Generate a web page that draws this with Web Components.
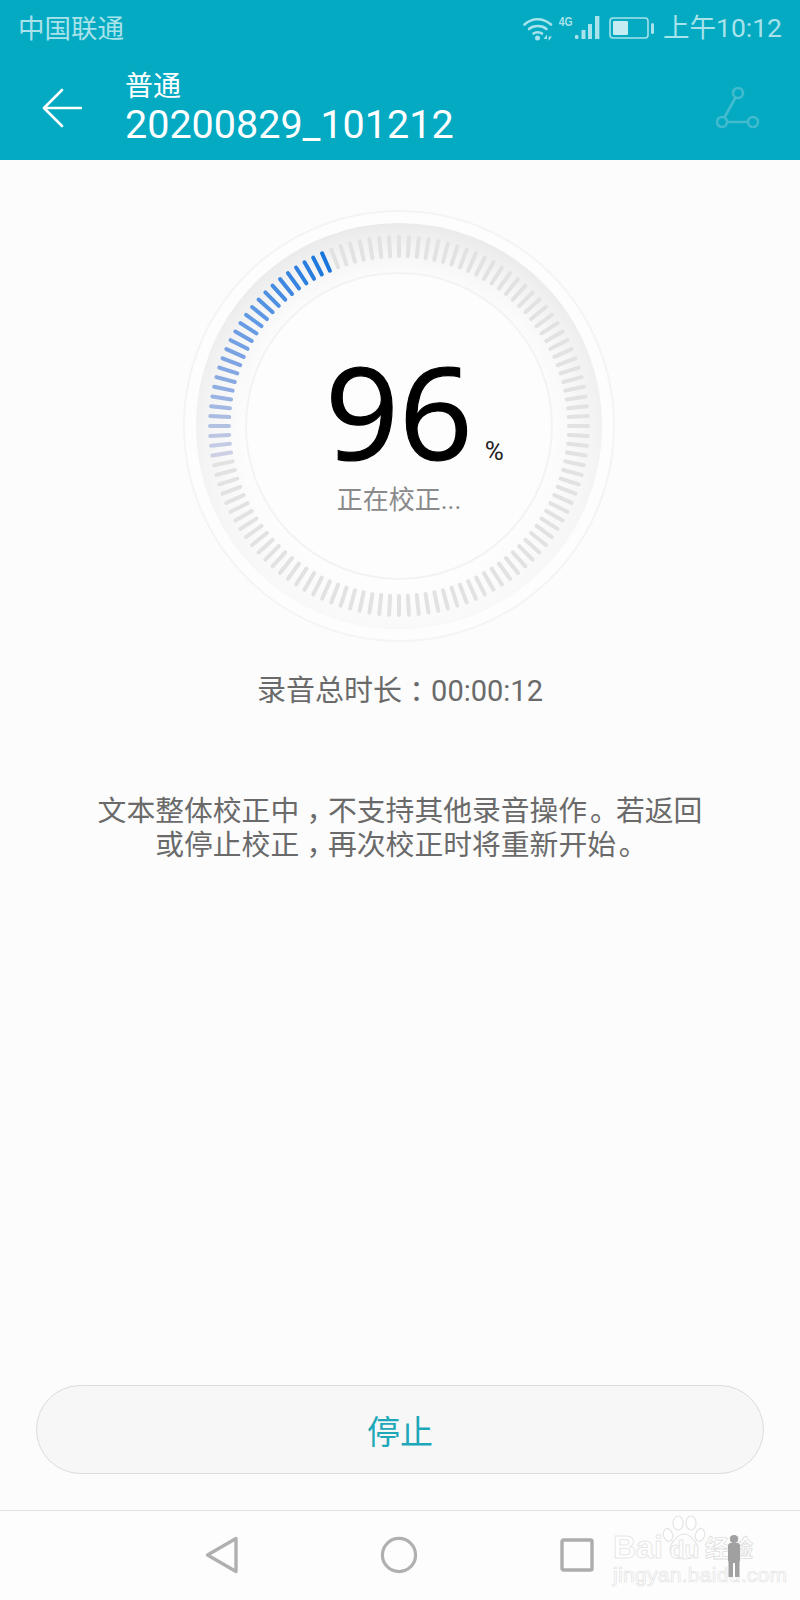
<!DOCTYPE html>
<html lang="zh">
<head>
<meta charset="utf-8">
<title>校正</title>
<style>
html,body{margin:0;padding:0;background:#fcfcfc}
body{font-family:Roboto,"Noto Sans CJK SC",sans-serif}
</style>
</head>
<body>
<recorder-app>
  <app-header>
    <span slot="carrier">中国联通</span>
    <span slot="time">上午10:12</span>
    <span slot="mode">普通</span>
    <span slot="name">20200829_101212</span>
  </app-header>
  <progress-dial value="96" label="正在校正..."></progress-dial>
  <info-text>录音总时长<cjk-punct>：</cjk-punct>00:00:12</info-text>
  <notice-text>文本整体校正中<cjk-punct>，</cjk-punct>不支持其他录音操作<cjk-punct style="--l:.1em">。</cjk-punct>若返回<br>或停止校正<cjk-punct>，</cjk-punct>再次校正时将重新开始<cjk-punct style="--l:.1em">。</cjk-punct></notice-text>
  <stop-button>停止</stop-button>
  <nav-bar></nav-bar>
</recorder-app>
<script>
function def(name, html, setup){
  customElements.define(name, class extends HTMLElement{
    constructor(){super();const r=this.attachShadow({mode:'open'});r.innerHTML=html;}
    connectedCallback(){ if(setup) setup(this); }
  });
}
const FONT='Roboto,"Noto Sans CJK SC",sans-serif';

def('recorder-app',`<style>
:host{display:flex;flex-direction:column;width:800px;height:1600px;background:#fcfcfc;overflow:hidden;font-family:${FONT}}
</style><slot></slot>`);

def('cjk-punct',`<style>
:host{display:inline;font-feature-settings:"halt";padding-left:var(--l,.25em);padding-right:calc(.5em - var(--l,.25em))}
</style><slot></slot>`);

def('app-header',`<style>
:host{display:block;height:160px;background:#03aac2;color:#fff;flex:none}
.status{display:flex;align-items:center;height:55px;padding:2px 18px 0 18px;color:#a8e2ea;font-size:26.5px;box-sizing:border-box}
.sp{flex:1}
.carrier{line-height:53px}
.icons{display:flex;align-items:center;margin-top:-2px}
.time{font-size:26.5px;margin-left:8px;line-height:53px}
.g4{font:bold 13px/13px "Liberation Sans",sans-serif;transform:scaleX(.8);margin:-12px 0 0 3px;color:#a8e2ea}
svg{display:block}
.bar{display:flex;align-items:center;height:105px;padding-left:42px;padding-right:40px;box-sizing:border-box}
.titles{margin-left:43px;display:flex;flex-direction:column;margin-top:3px}
.mode{font-size:28px;line-height:32px}
.name{font-size:39.5px;line-height:46px;margin-top:-1px}
</style>
<div class="status">
  <span class="carrier"><slot name="carrier"></slot></span>
  <span class="sp"></span>
  <div class="icons">
    <svg width="31" height="26" viewBox="0 0 31 26" fill="none" stroke="#a8e2ea" stroke-width="2.6" stroke-linecap="round">
      <path d="M1.5 9.5C9 2.5 20 2.5 28 9.5"/><path d="M6 14C10.5 10 19 10 23.5 14"/><path d="M10.5 18.5C12.5 16.8 17 16.8 19 18.5"/>
      <circle cx="14.5" cy="23" r="2.5" fill="#a8e2ea" stroke="none"/>
      <path d="M24 19.5l-3.4 4.5h3.4zM25.6 26l3.4-4.5h-3.4z" fill="#a8e2ea" stroke="none"/>
    </svg>
    <span class="g4">4G</span>
    <svg width="27" height="26" viewBox="0 0 27 26" fill="#a8e2ea"><rect x="1" y="20" width="3.4" height="4" rx="1"/><rect x="7.5" y="15" width="4" height="9"/><rect x="14" y="9" width="4" height="15"/><rect x="21" y="1" width="4.4" height="23"/></svg>
    <svg width="46" height="24" viewBox="0 0 46 24" style="margin-left:8px" fill="none"><rect x="1" y="2" width="38" height="20" rx="3" stroke="#a8e2ea" stroke-width="1.6"/><rect x="4" y="5" width="15" height="14" rx="1" fill="#c4ecf2"/><rect x="42" y="7" width="3" height="11" rx="1.5" fill="#a8e2ea"/></svg>
    <span class="time"><slot name="time"></slot></span>
  </div>
</div>
<div class="bar">
  <svg width="40" height="40" viewBox="0 0 40 40" fill="none" stroke="#fff" stroke-width="2.6" stroke-linecap="round" stroke-linejoin="round"><path d="M39 20H2M20 2L2 20l18 18"/></svg>
  <div class="titles"><span class="mode"><slot name="mode"></slot></span><span class="name"><slot name="name"></slot></span></div>
  <span class="sp"></span>
  <svg width="44" height="44" viewBox="0 0 44 44" fill="none" stroke="#42bbce" stroke-width="2.6"><circle cx="22" cy="7" r="5"/><circle cx="6" cy="36" r="5"/><circle cx="37" cy="36" r="5"/><path d="M19.5 11.5L8.5 31.5M11 36H32"/></svg>
</div>`);

def('progress-dial',`<style>
:host{display:block;position:relative;width:440px;height:440px;margin:46px 0 0 179px;flex:none;font-family:${FONT}}
svg{position:absolute;left:0;top:0;display:block}
.c{position:absolute;inset:0;display:flex;flex-direction:column;align-items:center}
.num{margin-top:139px;height:130px;display:flex;align-items:baseline;font-family:"Open Sans",sans-serif;font-size:129px;line-height:130px;color:#000;-webkit-text-stroke:1.2px #000}
.pct{width:0;font-family:Roboto,sans-serif;font-size:26px;line-height:26px;white-space:nowrap;color:#222;-webkit-text-stroke:0}
.pct span{margin-left:12px}
.lab{font-size:26px;line-height:34px;color:#8a8a8a;margin-top:8px}
</style>
<svg width="440" height="440" viewBox="-220 -220 440 440" fill="none">
<defs>
<radialGradient id="r" gradientUnits="userSpaceOnUse" cx="0" cy="0" r="204"><stop offset=".75" stop-color="#fbfbfb"/><stop offset=".86" stop-color="#f5f5f5"/><stop offset="1" stop-color="#eaeaea"/></radialGradient>
<linearGradient id="w" x1="0" y1="0" x2="0" y2="1"><stop offset="0" stop-color="#fff" stop-opacity="0"/><stop offset="1" stop-color="#fff" stop-opacity=".7"/></linearGradient>
</defs>
<circle r="215" stroke="#f4f4f4" stroke-width="2" fill="#fdfdfd"/>
<circle r="178" stroke="url(#r)" stroke-width="50"/>
<circle r="178" stroke="url(#w)" stroke-width="50"/>
<circle r="153" stroke="#f3f3f3" stroke-width="2" fill="#fdfdfd"/>
<g id="t" stroke-width="4" stroke-linecap="round"></g>
</svg>
<div class="c"><div class="num"><span id="v"></span><span class="pct"><span>%</span></span></div><div class="lab" id="l"></div></div>`, el=>{
  const r=el.shadowRoot, g=r.getElementById('t');
  r.getElementById('v').textContent=el.getAttribute('value');
  r.getElementById('l').textContent=el.getAttribute('label');
  if(g.childElementCount) return;
  const stops=[[0,[25,118,220]],[.35,[90,150,228]],[.7,[140,170,225]],[1,[205,208,228]]];
  const mix=t=>{for(let i=1;i<stops.length;i++){if(t<=stops[i][0]){const a=stops[i-1],b=stops[i],k=(t-a[0])/(b[0]-a[0]);return 'rgb('+a[1].map((v,j)=>Math.round(v+(b[1][j]-v)*k)).join(',')+')';}}return 'rgb(205,208,228)';};
  let s='';
  for(let i=0;i<120;i++){
    const deg=i*3-24, a=deg*Math.PI/180, sn=Math.sin(a), cs=-Math.cos(a);
    const back=(i===0?0:(120-i)*3);
    const col=i===0?mix(0):(back<=75?mix(back/75):'#e2e2e2');
    s+=`<line x1="${(sn*170).toFixed(2)}" y1="${(cs*170).toFixed(2)}" x2="${(sn*189).toFixed(2)}" y2="${(cs*189).toFixed(2)}" stroke="${col}"/>`;
  }
  g.innerHTML=s;
});

def('info-text',`<style>
:host{display:block;text-align:center;font-size:29px;line-height:36px;color:#6a6a6a;margin-top:27px;flex:none;font-family:${FONT}}
</style><slot></slot>`);

def('notice-text',`<style>
:host{display:block;text-align:center;font-size:28.8px;line-height:34px;color:#6a6a6a;margin-top:85px;flex:none;font-family:${FONT}}
</style><slot></slot>`);

def('stop-button',`<style>
:host{display:flex;align-items:center;justify-content:center;box-sizing:border-box;margin:auto 36px 36px;height:89px;border:1.5px solid #dcdcdc;border-radius:45px;background:#f7f7f7;color:#1ca8b9;font-size:33px;flex:none;font-family:${FONT}}
</style><slot></slot>`);

def('nav-bar',`<style>
:host{display:block;position:relative;box-sizing:border-box;height:90px;border-top:1.5px solid #e2e2e2;background:#fdfdfd;flex:none;font-family:"Liberation Sans",sans-serif}
.row{display:flex;align-items:center;justify-content:center;height:88px;gap:0}
.row svg{display:block}
.mark{position:absolute;left:613px;top:-4px;width:150px;height:86px}
.bd{position:absolute;left:0;top:25px;font-size:32px;font-weight:bold;line-height:30px;color:#fff;-webkit-text-stroke:1px #e8e8e8;white-space:nowrap}
.bd .du{margin-left:7px;font-size:24px}
.jy{position:absolute;left:0;top:58px;font-size:21px;line-height:20px;color:#fff;-webkit-text-stroke:.7px #e4e4e4;white-space:nowrap;letter-spacing:.3px}
.jing{position:absolute;left:92px;top:26px;font:bold 24px/28px "Noto Sans CJK SC",sans-serif;color:#fff;-webkit-text-stroke:.8px #dedede;white-space:nowrap}
.paw{position:absolute;left:49px;top:8px}
.man{position:absolute;left:114px;top:27px}
</style>
<div class="row">
  <svg width="34" height="38" viewBox="0 0 34 38" fill="none" stroke="#b0b0b0" stroke-width="3.4" stroke-linejoin="round" style="margin-left:-1px"><path d="M31 2.5V35.5L2.5 19Z"/></svg>
  <svg width="38" height="38" viewBox="0 0 38 38" fill="none" stroke="#b0b0b0" stroke-width="3.2" style="margin-left:141px"><circle cx="19" cy="19" r="16.6"/></svg>
  <svg width="34" height="34" viewBox="0 0 34 34" fill="none" stroke="#adadad" stroke-width="3.4" stroke-linejoin="round" style="margin-left:142px"><rect x="2" y="2" width="30" height="30" rx="1.5"/></svg>
</div>
<div class="mark">
  <svg class="paw" width="44" height="46" viewBox="0 0 44 46" fill="#fff" stroke="#e4e4e4" stroke-width="1.2"><ellipse cx="6" cy="20" rx="4.5" ry="6.5" transform="rotate(-15 6 20)"/><ellipse cx="16" cy="8" rx="5" ry="7"/><ellipse cx="29" cy="8" rx="5" ry="7"/><ellipse cx="38" cy="20" rx="4.5" ry="6.5" transform="rotate(15 38 20)"/><path d="M22 19c6 0 14 9 14 16 0 6-6 9-14 9S8 41 8 35c0-7 8-16 14-16z" fill="none"/></svg>
  <span class="bd">Bai<span class="du">du</span></span>
  <span class="jing">经验</span>
  <span class="jy">jingyan.baidu.com</span>
  <svg class="man" width="14" height="44" viewBox="0 0 14 44" fill="#a0a0a0"><circle cx="7" cy="5" r="4"/><rect x="1" y="9" width="12" height="20" rx="3"/><rect x="1.5" y="28" width="4.5" height="15"/><rect x="8" y="28" width="4.5" height="15"/></svg>
</div>`);
</script>
</body>
</html>
